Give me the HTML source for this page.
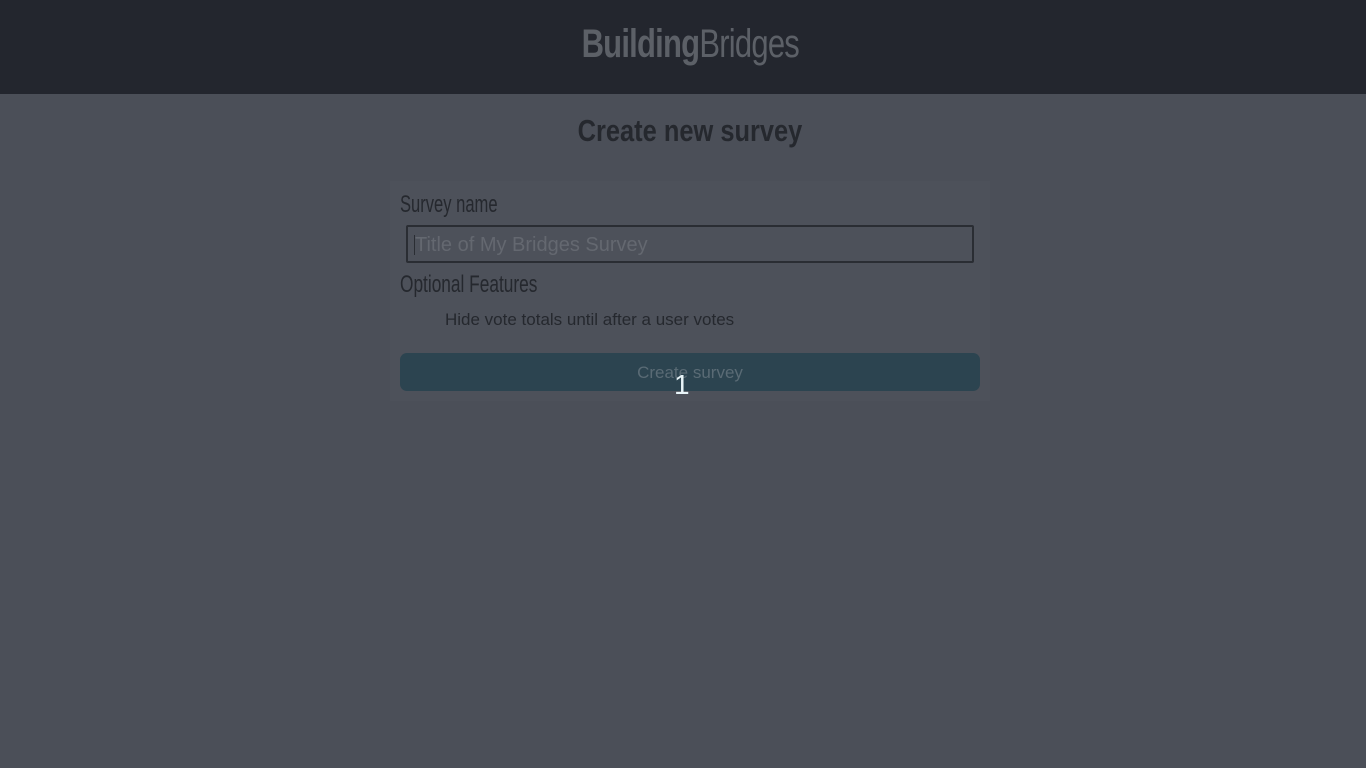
<!DOCTYPE html>
<html><head><meta charset="utf-8"><style>
html,body{margin:0;padding:0;width:1366px;height:768px;background:#4b4f58;overflow:hidden;font-family:"Liberation Sans",sans-serif}
.hdr{height:94px;background:#23262e}
.c{position:absolute;left:7px;width:1366px;text-align:center}
.c span{display:inline-block}
.logo{top:22px;font-size:40px;color:#5c6067;letter-spacing:-1px}
.logo span{transform:scaleX(0.775)}
h1{top:113px;margin:0;font-weight:bold;font-size:31px;color:#25282e;left:10px}
h1 span{transform:scaleX(0.82)}
.card{position:absolute;left:390px;top:181px;width:600px;height:220px;background:#4d515a}
.lbl{position:absolute;left:10px;font-size:24px;color:#25282e;transform-origin:0 0}
.inp{position:absolute;left:16px;top:44px;width:568px;height:38px;border:2px solid #2a2d33;border-radius:2px;box-sizing:border-box}
.inp span{position:absolute;left:7px;top:7px;font-size:20px;color:#646870}
.inp i{position:absolute;left:6px;top:8px;width:1px;height:20px;background:#2a2d33}
.chk{position:absolute;left:55px;top:129px;font-size:17px;color:#25282e}
.btn{position:absolute;left:10px;top:172px;width:580px;height:38px;background:#2c4450;border-radius:7px;text-align:center;line-height:40px;font-size:17px;color:#5a6b75}
.one{position:absolute;left:674px;top:369px;font-size:28px;color:#e8f4f8}
</style></head><body>
<div class="hdr"></div>
<div class="c logo"><span><b>Building</b>Bridges</span></div>
<h1 class="c"><span>Create new survey</span></h1>
<div class="card">
<div class="lbl" style="top:10px;transform:scaleX(0.69)">Survey name</div>
<div class="inp"><i></i><span>Title of My Bridges Survey</span></div>
<div class="lbl" style="top:90px;transform:scaleX(0.72)">Optional Features</div>
<div class="chk">Hide vote totals until after a user votes</div>
<div class="btn">Create survey</div>
</div>
<div class="one">1</div>
</body></html>
